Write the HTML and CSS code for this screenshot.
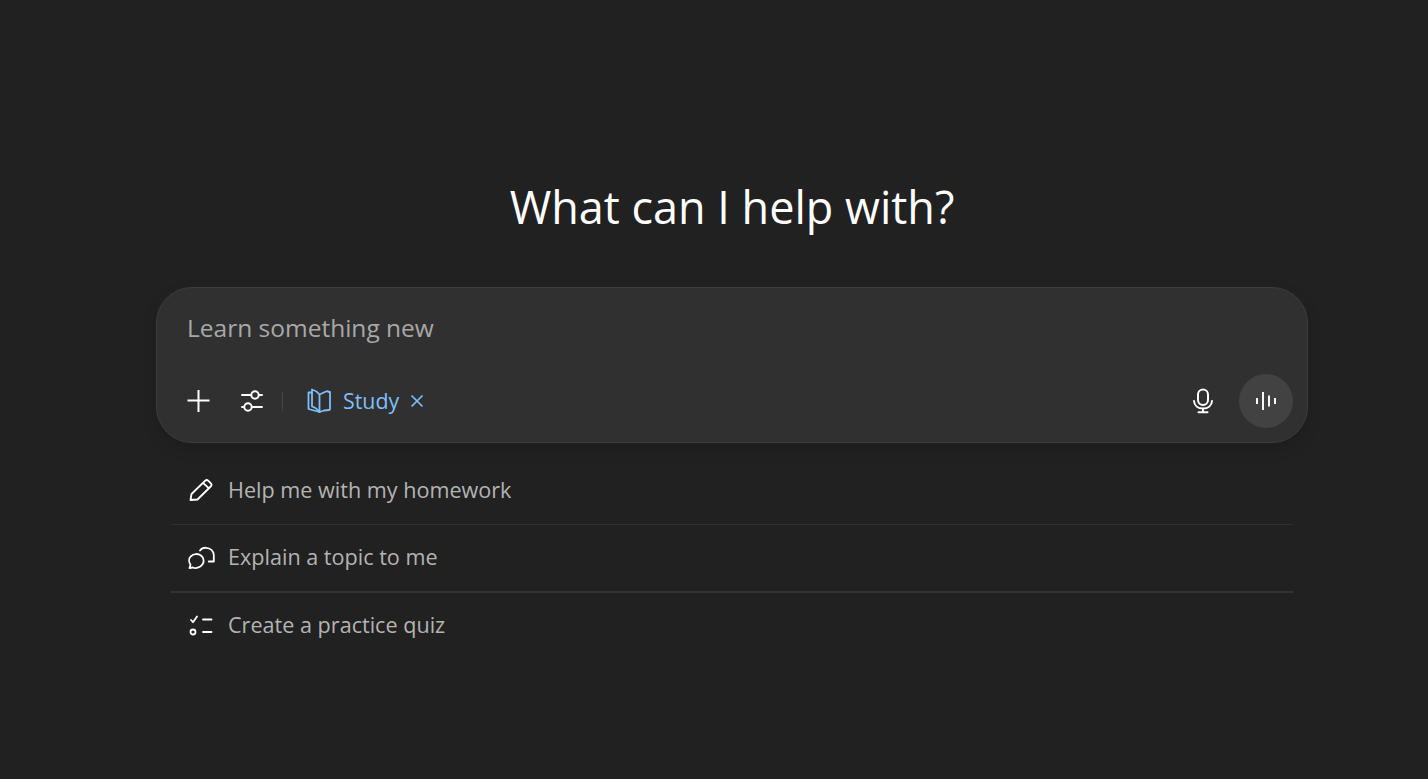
FILE: index.html
```html
<!DOCTYPE html>
<html lang="en">
<head>
<meta charset="utf-8">
<title>What can I help with?</title>
<link rel="stylesheet" href="styles.css">
</head>
<body>
<main class="page">
  <h1 class="title">What can I help with?</h1>
  <section class="composer">
    <div class="placeholder">Learn something new</div>
    <div class="toolbar">
      <button class="tool">
        <svg width="24" height="24" viewBox="0 0 24 24" fill="none" stroke="#fff" stroke-width="2"><path d="M11.500 1v22M.5 11.500h22"/></svg>
      </button>
      <button class="tool">
        <svg width="24" height="24" viewBox="0 0 24 24" fill="none" stroke="#fff" stroke-width="2" stroke-linecap="round"><path d="M2 6h9M19.500 6h2.500M2 18h2M12.500 18h9.500"/><circle cx="15" cy="6" r="3.700"/><circle cx="8" cy="18" r="3.700"/></svg>
      </button>
      <span class="divider"></span>
      <div class="chip">
        <svg class="chip-book" width="26" height="26" viewBox="0 0 26 26" fill="none" stroke="#7ebffa" stroke-width="1.800" stroke-linejoin="round" stroke-linecap="round"><path d="M13.500 6.500 20 3.500c1.500-.5 2.500 0 3 .5h1v17c0 .5-.5 1-1 1l-5 .5-4.500 1.500z"/><path d="M13.500 6.500C12 4.500 9.500 2.500 6 1.500v17c3.500 1 6 3.500 7.500 5.500"/><path d="M6 4.500H2.500v16.500l11 3"/></svg>
        <span class="chip-label">Study</span>
        <svg class="chip-x" width="14" height="14" viewBox="0 0 14 14" fill="none" stroke="#7ebffa" stroke-width="1.700"><path d="M1.500 1.500l11 11M12.500 1.500l-11 11"/></svg>
      </div>
      <div class="spacer"></div>
      <button class="tool">
        <svg width="24" height="26" viewBox="0 0 24 26" fill="none" stroke="#fff" stroke-width="2" stroke-linecap="round"><rect x="7" y="1.500" width="10" height="15.500" rx="5"/><path d="M3 13c.3 4.600 4 7.500 9 7.500s8.700-2.900 9-7.500M12 20.500v3.500M7.500 24.300h9"/></svg>
      </button>
      <button class="voice">
        <svg width="22" height="20" viewBox="0 0 22 20" fill="none" stroke="#fff" stroke-width="1.900"><path d="M2 7v6M8 1v18M14 4.500v11M20 7v6"/></svg>
      </button>
    </div>
  </section>
  <ul class="suggestions">
    <li class="suggestion">
      <svg width="28" height="24" viewBox="0 0 28 24" fill="none" stroke="#fff" stroke-width="1.800" stroke-linejoin="round"><path d="M2.500 22l1-6L17 2.800c1-.9 2.400-.9 3.400 0l2.300 2.300c1 1 1 2.400 0 3.400L9.500 21.500z"/><path d="M15 4.800l6 5.600"/></svg>
      <span>Help me with my homework</span>
    </li>
    <li class="suggestion">
      <svg width="28" height="24" viewBox="0 0 28 24" fill="none" stroke="#fff" stroke-width="1.800" stroke-linejoin="round" stroke-linecap="round"><path d="M1.500 22l1-3.500C.6 16 .6 12.500 2.800 10.300 5.500 7.500 10 7.300 13 9.500c3 2.400 3.500 6.500 1.200 9.300C12 21.500 8 22.700 4.800 21.500z"/><path d="M12 4.500C13.500 2.500 15.500 1.600 18 1.800c4.200.3 7.500 3 7.800 7.200v6.500h-5"/></svg>
      <span>Explain a topic to me</span>
    </li>
    <li class="suggestion">
      <svg width="28" height="24" viewBox="0 0 28 24" fill="none" stroke="#fff" stroke-width="1.800" stroke-linecap="round" stroke-linejoin="round"><path d="M3 7l2 2.200L9 3.500M15 6.500h8.500M15 19h8.500"/><circle cx="5" cy="19" r="2.500"/></svg>
      <span>Create a practice quiz</span>
    </li>
  </ul>
</main>
</body>
</html>
```
FILE: styles.css
```css
* { box-sizing: border-box; }
html, body { margin: 0; height: 100%; }
body {
  background: #212121;
  color: #fff;
  font-family: "Open Sans", "Noto Sans", sans-serif;
  overflow: hidden;
}
.page {
  display: flex;
  flex-direction: column;
  align-items: center;
  padding: 176px 0 0 36px;
}
.title {
  margin: 0 0 56px;
  height: 55px;
  line-height: 62px;
  font-size: 45px;
  font-weight: 400;
}
.composer {
  width: 1152px;
  height: 156px;
  background: #303030;
  border: 1px solid #3d3d3d;
  border-radius: 36px;
  box-shadow: 0 6px 16px rgba(0,0,0,.12);
  padding: 24px 14px 14px 30px;
  display: flex;
  flex-direction: column;
  justify-content: space-between;
}
.placeholder {
  font-size: 24.500px;
  line-height: 32px;
  color: #a8a8a8;
}
.toolbar {
  display: flex;
  align-items: center;
  height: 54px;
}
.tool {
  border: 0;
  background: none;
  padding: 0;
  display: flex;
  align-items: center;
  justify-content: center;
  width: 24px;
  height: 54px;
}
.tool + .tool { margin-left: 29px; }
.divider {
  width: 1px;
  height: 19px;
  background: #454545;
  margin: 0 23px 0 18px;
}
.chip {
  display: flex;
  align-items: center;
  color: #7ebffa;
}
.chip-label {
  font-size: 21.400px;
  margin: 0 11px 2px 11px;
}
.spacer { flex: 1; }
.voice {
  border: 0;
  padding: 0;
  width: 54px;
  height: 54px;
  border-radius: 50%;
  background: #424242;
  margin-left: 24px;
  display: flex;
  align-items: center;
  justify-content: center;
}
.suggestions {
  list-style: none;
  margin: 14px 0 0;
  padding: 0;
  width: 1122px;
}
.suggestion {
  display: flex;
  align-items: center;
  gap: 12px;
  height: 67.500px;
  padding-left: 17px;
  font-size: 21.600px;
  color: #b4b4b4;
  border-bottom: 1px solid #303030;
}
.suggestion span { margin-bottom: 2px; }
.suggestion:nth-child(2) { height: 68.500px; border-bottom-width: 2px; border-bottom-color: #343434; }
.suggestion:last-child { height: 64px; border-bottom: 0; }
.suggestion svg { flex: none; }
```
